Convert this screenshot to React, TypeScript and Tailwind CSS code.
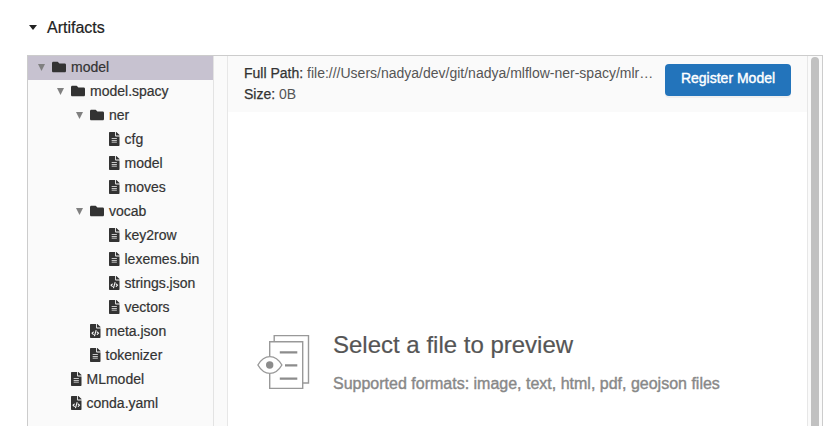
import React from "react";
import { FaFileAlt, FaFileCode, FaFolder } from "react-icons/fa";

type Kind = "folder" | "text" | "code";

interface TreeNode {
  name: string;
  kind: Kind;
  selected?: boolean;
  children?: TreeNode[];
}

const tree: TreeNode = {
  name: "model",
  kind: "folder",
  selected: true,
  children: [
    {
      name: "model.spacy",
      kind: "folder",
      children: [
        {
          name: "ner",
          kind: "folder",
          children: [
            { name: "cfg", kind: "text" },
            { name: "model", kind: "text" },
            { name: "moves", kind: "text" },
          ],
        },
        {
          name: "vocab",
          kind: "folder",
          children: [
            { name: "key2row", kind: "text" },
            { name: "lexemes.bin", kind: "text" },
            { name: "strings.json", kind: "code" },
            { name: "vectors", kind: "text" },
          ],
        },
        { name: "meta.json", kind: "code" },
        { name: "tokenizer", kind: "text" },
      ],
    },
    { name: "MLmodel", kind: "text" },
    { name: "conda.yaml", kind: "code" },
  ],
};

const icons = { folder: FaFolder, text: FaFileAlt, code: FaFileCode };

function Branch({ node, depth }: { node: TreeNode; depth: number }) {
  const Icon = icons[node.kind];
  const isFolder = node.kind === "folder";
  return (
    <li>
      <div
        className={`flex h-6 items-center pb-0.5 text-[#333] ${node.selected ? "bg-[#c7c2d0]" : ""}`}
        style={{ paddingLeft: 10 + depth * 19 }}
      >
        {isFolder && (
          <svg viewBox="0 0 7 7" className="mr-[7px] size-[7px] fill-[#808080]">
            <path d="M0 0h7L3.5 7z" />
          </svg>
        )}
        <Icon
          className={
            isFolder
              ? "mr-[5px] h-3.5 w-3.5 shrink-0"
              : "mr-[5px] ml-[14px] h-3.5 w-[10.5px] shrink-0"
          }
        />
        <span className="leading-[22px] [-webkit-text-stroke:0.2px_#333]">{node.name}</span>
      </div>
      {node.children && (
        <ul>
          {node.children.map((child) => (
            <Branch key={child.name} node={child} depth={depth + 1} />
          ))}
        </ul>
      )}
    </li>
  );
}

function PreviewIcon() {
  return (
    <svg viewBox="0 0 54 56" className="h-14 w-[54px] shrink-0" fill="none" stroke="#999" strokeWidth="1.4">
      <path d="M17.200 7.800V1.600h34.300V49h-5.700" />
      <path d="M12.700 22.500V7.800h33v46.600h-33V39.500" />
      <path d="M.9 31C3.500 26.500 7.500 22.600 12.900 22.600S22.300 26.500 24.900 31C22.300 35.500 18.300 39.400 12.900 39.400S3.500 35.500.9 31Z" />
      <circle cx="12.700" cy="31" r="3.700" fill="#8c8c8c" stroke="none" />
      <path d="M22.800 18.400h17.500M28 31.400h12.300M22.800 44.600h17.500" stroke="#8c8c8c" strokeWidth="2.400" />
    </svg>
  );
}

export default function App() {
  return (
    <div className="flex h-[426px] w-[832px] flex-col overflow-hidden bg-white font-['Helvetica_Neue','Liberation_Sans',Arial,sans-serif] text-sm">
      <header className="flex h-[55px] items-center pl-[29px] text-base text-[#222]">
        <svg viewBox="0 0 8 5" className="mr-2.5 h-[5px] w-2 fill-current">
          <path d="M0 0h8L4 5z" />
        </svg>
        <h2 className="[-webkit-text-stroke:0.2px_#222]">Artifacts</h2>
      </header>
      <main className="ml-[27px] flex w-[796px] flex-1 border-x border-t border-[#ccc] bg-[#fafafa]">
        <ul className="w-[186px] shrink-0 border-r border-[#e3e3e3]">
          <Branch node={tree} depth={0} />
        </ul>
        <section className="ml-[13px] flex min-w-0 flex-1 flex-col border-x border-[#e7e7e7] bg-white">
          <div className="flex h-14 shrink-0 bg-[#fafafa] pr-4 pl-4">
            <div className="w-[411px] pt-[7px] leading-[21px] text-[#555]">
              <p className="truncate">
                <span className="text-[#333] [-webkit-text-stroke:0.25px_#333]">Full Path:</span>{" "}
                file:///Users/nadya/dev/git/nadya/mlflow-ner-spacy/mlr…
              </p>
              <p>
                <span className="text-[#333] [-webkit-text-stroke:0.25px_#333]">Size:</span> 0B
              </p>
            </div>
            <button className="mt-2 ml-auto h-8 w-[126px] rounded bg-[#2374bb] pb-1 text-white shadow-[0_2px_0_rgba(0,0,0,0.045)] [-webkit-text-stroke:0.4px_#fff]">
              Register Model
            </button>
          </div>
          <div className="mt-[222px] ml-[29px] flex">
            <PreviewIcon />
            <div className="ml-[22px]">
              <h1 className="-mt-[4px] text-2xl leading-[30px] text-[#555] [-webkit-text-stroke:0.2px_#555]">Select a file to preview</h1>
              <p className="mt-3 text-base leading-6 text-[#888] [-webkit-text-stroke:0.4px_#888]">
                Supported formats: image, text, html, pdf, geojson files
              </p>
            </div>
          </div>
        </section>
        <div className="w-3.5 pt-px pl-[3px]">
          <div className="h-full w-2 rounded-t-full bg-[#c1c1c1]" />
        </div>
      </main>
    </div>
  );
}
